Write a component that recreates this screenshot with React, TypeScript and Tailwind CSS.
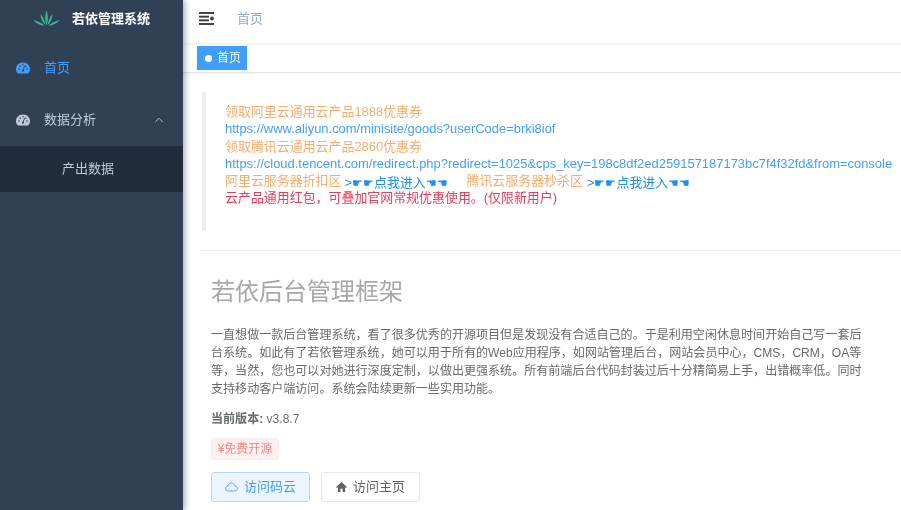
import React from 'react';
import { ChevronUp } from 'lucide-react';

const Gauge: React.FC<{ className: string }> = ({ className }) => (
  <svg viewBox="0 0 14 12" className={className} fill="currentColor">
    <path fillRule="evenodd" d="M7 0.5C3.1 0.5 0 3.4 0 7c0 1.5.5 2.9 1.4 4 .2.2.5.4.8.4h9.6c.3 0 .6-.2.8-.4.9-1.1 1.4-2.500 1.400-4 0-3.600-3.100-6.500-7-6.500zM7 2a.8.8 0 1 1 0 1.600A.8.8 0 0 1 7 2zM3 7.800a.8.8 0 1 1 0-1.600.8.8 0 0 1 0 1.600zm1.200-2.700a.8.8 0 1 1 0-1.600.8.8 0 0 1 0 1.600zM8.200 9.500H5.800C5.800 8.600 6.200 8 6.700 7.800L8.300 3.900c.1-.3.8-.1.7.2L7.700 7.900c.4.3.5.9.5 1.600zM9.800 5.100a.8.8 0 1 1 0-1.600.8.8 0 0 1 0 1.600zM11 7.800a.8.8 0 1 1 0-1.600.8.8 0 0 1 0 1.600z" />
  </svg>
);

const Logo = () => (
  <svg viewBox="0 0 28 16" className="w-[27px] h-[16px] mb-[2px]" fill="#3dba98">
    <path d="M14 15.500C12 10.500 12.400 5 14 0c1.600 5 2 10.500 0 15.500z" />
    <path d="M13 15.500C9.800 12.500 8 8.500 7.800 3.500c2.600 3.500 4.400 7.500 5.200 12z" />
    <path d="M15 15.500c3.200-3 5-7 5.200-12-2.600 3.500-4.400 7.500-5.200 12z" />
    <path d="M12 16C7.500 15.500 3.500 13.500 0 10c4.800 1 9 3 12 6z" />
    <path d="M16 16c4.500-.5 8.500-2.500 12-6-4.800 1-9 3-12 6z" />
  </svg>
);

const Sidebar = () => (
  <aside className="w-[183px] shrink-0 bg-[#304156] shadow-[2px_0_6px_rgba(0,21,41,0.35)] z-10 text-[13px]">
    <div className="h-[37px] flex items-center pl-[33px] gap-[12px]">
      <Logo />
      <span className="text-white font-bold">若依管理系统</span>
    </div>
    <div className="h-[61px] flex items-center pl-[16px] text-[#409eff]">
      <Gauge className="w-[14px] h-[12px] mr-[14px]" />
      <span>首页</span>
    </div>
    <div className="h-[53px] mt-[-5px] flex items-center pl-[16px] text-[#bfcbd9]">
      <Gauge className="w-[14px] h-[12px] mr-[14px]" />
      <span>数据分析</span>
      <ChevronUp className="w-[14px] h-[14px] ml-auto mr-[17px]" strokeWidth={1.5} />
    </div>
    <div className="h-[46px] bg-[#1f2d3d] flex items-center pl-[62px] text-[#bfcbd9]">产出数据</div>
  </aside>
);

const Header = () => (
  <div className="h-[43px] flex items-center pl-[16px] pb-[6px] shadow-[0_1px_4px_rgba(0,21,41,0.08)]">
    <svg viewBox="0 0 15 13" className="w-[15px] h-[13px]" fill="#444444">
      <rect width="15" height="2" />
      <rect y="3.700" width="10" height="2" />
      <rect y="7.300" width="10" height="2" />
      <rect y="11" width="15" height="2" />
      <circle cx="13" cy="6.500" r="2" />
    </svg>
    <span className="ml-[23px] text-[13px] text-[#97a8be]">首页</span>
  </div>
);

const TagsBar = () => (
  <div className="h-[30px] pl-[14px] pt-[3px] border-b border-[#e6e6e6] shadow-[0_1px_3px_rgba(0,0,0,0.06)]">
    <div className="w-[50px] h-[24px] bg-[#409eff] text-white text-[12px] flex items-center pl-[8px] gap-[5px]">
      <span className="w-[7px] h-[7px] rounded-full bg-white" />
      <span>首页</span>
    </div>
  </div>
);

const Hands = ({ children }: { children: string }) => <span className="text-[11.5px]">{children}</span>;

const Notice = () => (
  <div className="ml-[19px] mt-[19px] pl-[19px] border-l-4 border-[#eeeeee] h-[139px] pt-[11px] text-[12.95px] leading-[17.3px] whitespace-nowrap">
    <div className="text-[#f8ac6e]">领取阿里云通用云产品1888优惠券</div>
    <div className="text-[#409eff]">https://www.aliyun.com/minisite/goods?userCode=brki8iof</div>
    <div className="text-[#f8ac6e]">领取腾讯云通用云产品2860优惠券</div>
    <div className="text-[#409eff]">https://cloud.tencent.com/redirect.php?redirect=1025&amp;cps_key=198c8df2ed259157187173bc7f4f32fd&amp;from=console</div>
    <div className="flex h-[17px]">
      <span className="text-[#f8ac6e]">阿里云服务器折扣区</span>
      <span className="text-[#1e8cf0] ml-[3px] w-[122px] pt-[2px]">&gt;<Hands>☛☛</Hands>点我进入<Hands>☚☚</Hands></span>
      <span className="text-[#f8ac6e]">腾讯云服务器秒杀区</span>
      <span className="text-[#1e8cf0] ml-[4px] pt-[2px]">&gt;<Hands>☛☛</Hands>点我进入<Hands>☚☚</Hands></span>
    </div>
    <div className="text-[#ee3a5a]">云产品通用红包，可叠加官网常规优惠使用。(仅限新用户)</div>
  </div>
);

const Intro = () => (
  <div className="border-t border-[#eeeeee] ml-[17px] mt-[19px] pl-[11px] pr-[38px] text-[12.05px] text-[#676a6c]">
    <h2 className="text-[24px] leading-[26px] text-[#a8a8a8] font-normal mt-[28px]">若依后台管理框架</h2>
    <p className="mt-[21px] leading-[18px]">
      一直想做一款后台管理系统，看了很多优秀的开源项目但是发现没有合适自己的。于是利用空闲休息时间开始自己写一套后台系统。如此有了若依管理系统，她可以用于所有的Web应用程序，如网站管理后台，网站会员中心，CMS，CRM，OA等等，当然，您也可以对她进行深度定制，以做出更强系统。所有前端后台代码封装过后十分精简易上手，出错概率低。同时支持移动客户端访问。系统会陆续更新一些实用功能。
    </p>
    <p className="mt-[12px] leading-[18px]">
      <b>当前版本:</b> <span>v3.8.7</span>
    </p>
    <div className="mt-[10px] w-[68px] h-[22px] rounded-[4px] bg-[#fef0f0] border border-[#fdeaea] text-[#f78989] text-[12px] flex items-center justify-center">
      ¥免费开源
    </div>
    <div className="mt-[12px] flex gap-[11px] text-[13px]">
      <button className="w-[99px] h-[30px] rounded-[3px] border border-[#b3d8ff] bg-[#ecf5ff] text-[#409eff] flex items-center justify-center gap-[6px]">
        <svg viewBox="0 0 14 10" className="w-[13px] h-[10px]" fill="none" stroke="currentColor" strokeWidth="1">
          <path d="M3.500 9.300C1.800 9.300.6 8.200.6 6.700c0-1.400 1-2.400 2.300-2.600C3.300 2.100 4.900.8 6.800.8c2 0 3.600 1.300 4 3.200 1.500.1 2.600 1.200 2.600 2.700 0 1.500-1.200 2.600-2.800 2.600z" />
        </svg>
        访问码云
      </button>
      <button className="w-[99px] h-[30px] rounded-[3px] border border-[#e4e7ed] bg-white text-[#606266] flex items-center justify-center gap-[6px]">
        <svg viewBox="0 0 12 11" className="w-[11px] h-[10px]" fill="currentColor">
          <path d="M6 0L0 5.500l1 1L2 5.700V11h2.800V7.500h2.400V11H10V5.700l1 .8 1-1z" />
        </svg>
        访问主页
      </button>
    </div>
  </div>
);

export default function App() {
  return (
    <div className="w-[901px] h-[510px] overflow-hidden flex bg-white blur-[0.6px] font-['Liberation_Sans','Noto_Sans_CJK_SC',sans-serif]">
      <Sidebar />
      <main className="flex-1 min-w-0">
        <Header />
        <TagsBar />
        <Notice />
        <Intro />
      </main>
    </div>
  );
}
